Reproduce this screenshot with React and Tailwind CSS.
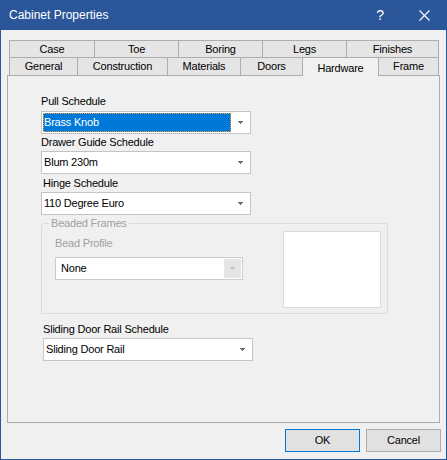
import React from 'react';

const row1 = [
  ['Case', 85],
  ['Toe', 84],
  ['Boring', 84],
  ['Legs', 84],
  ['Finishes', 93],
];

const Arrow = ({ color = '#606060' }) => (
  <svg width="5" height="3" viewBox="0 0 5 3" shapeRendering="crispEdges">
    <polygon points="0,0 5,0 2.5,3" fill={color} />
  </svg>
);

const Combo = ({ value, selected, disabled, width = 210 }) => (
  <div
    className={`flex items-center h-[23px] bg-white border ${disabled ? 'border-[#cccccc]' : 'border-[#c4c4c4]'}`}
    style={{ width }}
  >
    {selected ? (
      <div className="flex-1 ml-[1px] h-[19px] bg-[#0078d7] border border-dotted border-[#f7a23b] flex items-center text-white">
        {value}
      </div>
    ) : (
      <div className={`flex-1 ${disabled ? 'pl-[5px]' : 'pl-[2px]'} text-black`}>{value}</div>
    )}
    <div
      className={`w-[17px] h-[19px] flex items-center justify-center ml-[1px] mr-[1px] ${disabled ? 'bg-[#e5e5e5]' : ''}`}
    >
      <Arrow color={disabled ? '#c2c2c2' : '#6d6d6d'} />
    </div>
  </div>
);

const Label = ({ children, className = '' }) => (
  <div className={`h-[14px] leading-[14px] ${className}`}>{children}</div>
);

export default function App() {
  return (
    <div
      className="w-[447px] h-[460px] bg-[#f0f0f0] border-x border-b border-[#2b579a] flex flex-col text-[11px] tracking-[-0.2px] text-black"
      style={{ fontFamily: '"Liberation Sans", Arial, sans-serif' }}
    >
      {/* title bar */}
      <div className="h-[30px] bg-[#2b579a] text-white flex items-center pl-[8px] shrink-0">
        <span className="text-[12px] tracking-normal">Cabinet Properties</span>
        <span className="ml-auto text-[14px] w-[12px] text-center mr-[33px]">?</span>
        <svg width="11" height="11" viewBox="0 0 11 11" className="mr-[16px]">
          <path d="M0.5 0.5 L10.5 10.5 M10.5 0.5 L0.5 10.5" stroke="#ffffff" strokeWidth="1.1" />
        </svg>
      </div>

      {/* tabs */}
      <div className="mt-[10px] ml-[8px] flex flex-col">
        <div className="flex h-[17px]">
          {row1.map(([t, w], i) => (
            <div
              key={t}
              className={`flex items-center justify-center bg-[#e5e5e5] border-t border-l border-[#adadad] ${i === row1.length - 1 ? 'border-r' : ''}`}
              style={{ width: w }}
            >
              {t}
            </div>
          ))}
        </div>
        <div className="flex h-[18px] items-start">
          <div className="w-[68px] h-[18px] flex items-center justify-center bg-[#e5e5e5] border-t border-l border-[#adadad]">General</div>
          <div className="w-[90px] h-[18px] flex items-center justify-center bg-[#e5e5e5] border-t border-l border-[#adadad]">Construction</div>
          <div className="w-[73px] h-[18px] flex items-center justify-center bg-[#e5e5e5] border-t border-l border-[#adadad]">Materials</div>
          <div className="w-[62px] h-[18px] flex items-center justify-center bg-[#e5e5e5] border-t border-l border-[#adadad]">Doors</div>
          <div className="relative z-10 w-[77px] h-[19px] mb-[-1px] flex items-center justify-center pt-[3px] bg-[#f0f0f0] border-t border-x border-[#adadad]">Hardware</div>
          <div className="w-[60px] h-[18px] flex items-center justify-center bg-[#e5e5e5] border-t border-r border-[#adadad]">Frame</div>
        </div>
      </div>

      {/* tab page */}
      <div className="ml-[6px] w-[433px] h-[348px] border border-[#adadad] bg-[#f0f0f0] pl-[33px] pt-[18px] flex flex-col">
        <Label>Pull Schedule</Label>
        <div className="mt-[3px]">
          <Combo value="Brass Knob" selected />
        </div>
        <Label className="mt-[1px]">Drawer Guide Schedule</Label>
        <div className="mt-[2px]">
          <Combo value="Blum 230m" />
        </div>
        <Label className="mt-[2px] ml-[2px]">Hinge Schedule</Label>
        <div className="mt-[2px]">
          <Combo value="110 Degree Euro" />
        </div>

        <fieldset className="mt-[1px] w-[347px] h-[98px] border border-[#dcdcdc] rounded-[3px] flex">
          <legend className="ml-[7px] px-[2px] h-[14px] leading-[14px] text-[#a0a0a0]">Beaded Frames</legend>
          <div className="flex w-full">
            <div className="pl-[13px] w-[201px] flex flex-col">
              <Label className="mt-[6px] text-[#a0a0a0]">Bead Profile</Label>
              <div className="mt-[7px]">
                <Combo value="None" disabled width={188} />
              </div>
            </div>
            <div className="ml-[40px] mt-[1px] w-[98px] h-[77px] bg-white border border-[#dadada]" />
          </div>
        </fieldset>

        <Label className="mt-[8px] ml-[2px]">Sliding Door Rail Schedule</Label>
        <div className="mt-[2px] ml-[2px]">
          <Combo value="Sliding Door Rail" />
        </div>
      </div>

      {/* buttons */}
      <div className="mt-[6px] flex justify-end gap-[6px] pr-[5px]">
        <button className="w-[75px] h-[23px] bg-[#e1e1e1] border border-[#0078d7]">OK</button>
        <button className="w-[75px] h-[23px] bg-[#e1e1e1] border border-[#adadad]">Cancel</button>
      </div>
    </div>
  );
}
